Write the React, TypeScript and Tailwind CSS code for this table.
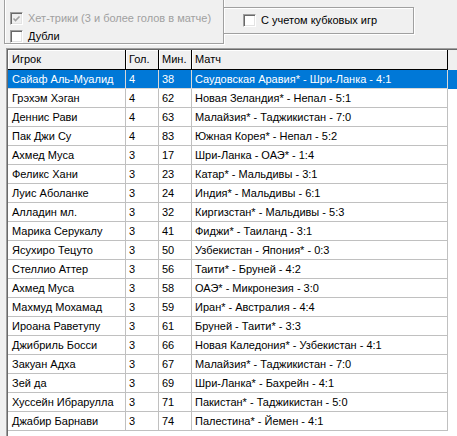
const rows: [string, number, number, string][] = [
  ['Сайаф Аль-Муалид', 4, 38, 'Саудовская Аравия* - Шри-Ланка - 4:1'],
  ['Грэхэм Хэган', 4, 62, 'Новая Зеландия* - Непал - 5:1'],
  ['Деннис Рави', 4, 63, 'Малайзия* - Таджикистан - 7:0'],
  ['Пак Джи Су', 4, 83, 'Южная Корея* - Непал - 5:2'],
  ['Ахмед Муса', 3, 17, 'Шри-Ланка - ОАЭ* - 1:4'],
  ['Феликс Хани', 3, 23, 'Катар* - Мальдивы - 3:1'],
  ['Луис Аболанке', 3, 24, 'Индия* - Мальдивы - 6:1'],
  ['Алладин мл.', 3, 32, 'Киргизстан* - Мальдивы - 5:3'],
  ['Марика Серукалу', 3, 41, 'Фиджи* - Таиланд - 3:1'],
  ['Ясухиро Тецуто', 3, 50, 'Узбекистан - Япония* - 0:3'],
  ['Стеллио Аттер', 3, 56, 'Таити* - Бруней - 4:2'],
  ['Ахмед Муса', 3, 58, 'ОАЭ* - Микронезия - 3:0'],
  ['Махмуд Мохамад', 3, 59, 'Иран* - Австралия - 4:4'],
  ['Ироана Раветупу', 3, 61, 'Бруней - Таити* - 3:3'],
  ['Джибриль Босси', 3, 66, 'Новая Каледония* - Узбекистан - 4:1'],
  ['Закуан Адха', 3, 67, 'Малайзия* - Таджикистан - 7:0'],
  ['Зей да', 3, 69, 'Шри-Ланка* - Бахрейн - 4:1'],
  ['Хуссейн Ибрарулла', 3, 71, 'Пакистан* - Таджикистан - 5:0'],
  ['Джабир Барнави', 3, 74, 'Палестина* - Йемен - 4:1'],
]

function CheckBox({ checked, disabled }: { checked?: boolean; disabled?: boolean }) {
  return (
    <span
      className={`relative w-[13px] h-[13px] shrink-0 border-t border-l border-t-[#a0a0a0] border-l-[#a0a0a0] border-b border-r border-b-white border-r-white shadow-[inset_1px_1px_0_#696969,inset_-1px_-1px_0_#e3e3e3] ${
        disabled ? 'bg-[#f0f0f0]' : 'bg-white'
      }`}
    >
      {checked && (
        <svg viewBox="0 0 11 11" className="absolute left-0 top-0 w-[11px] h-[11px]">
          <path d="M2.5 5.5 L4.5 7.5 L8.5 3.5" fill="none" stroke={disabled ? '#a0a0a0' : '#000'} strokeWidth="1.6" />
        </svg>
      )}
    </span>
  )
}

const cols = ['w-[118px] pl-[4px]', 'w-[33px] pl-[3px]', 'w-[33px] pl-[3px]', 'w-[256px] pl-[3px]']

export default function App() {
  return (
    <div className="w-[457px] h-[436px] overflow-hidden bg-[#f0f0f0] font-['Liberation_Sans',Arial,sans-serif] text-[11px] text-black">
      <div className="flex items-start h-[48px]">
        <div className="ml-[4px] -mt-[3px] w-[220px] h-[47px] border border-[#a0a0a0] shadow-[1px_1px_0_#fff,inset_1px_1px_0_#fff] flex flex-col gap-[5px] pt-[14px] pl-[5px]">
          <label className="flex items-center gap-[5px] h-[13px] whitespace-nowrap">
            <CheckBox checked disabled />
            <span className="text-[#a0a0a0]">Хет-трики (3 и более голов в матче)</span>
          </label>
          <label className="flex items-center gap-[5px] h-[13px] whitespace-nowrap">
            <CheckBox />
            <span>Дубли</span>
          </label>
        </div>
        <div className="-ml-[1px] mt-[7px] w-[191px] h-[27px] border border-[#a0a0a0] shadow-[1px_1px_0_#fff,inset_1px_1px_0_#fff] flex items-center pl-[19px]">
          <label className="flex items-center gap-[5px] whitespace-nowrap">
            <CheckBox />
            <span>С учетом кубковых игр</span>
          </label>
        </div>
      </div>

      <div className="ml-[6px] h-[388px] border-l border-t border-[#a0a0a0]">
        <div className="h-full border-l border-t border-[#696969] bg-white">
          <div className="flex h-[20px] bg-[#f0f0f0]">
            {['Игрок', 'Гол.', 'Мин.', 'Матч'].map((h, i) => (
              <div
                key={h}
                className={`${cols[i]} h-[20px] flex items-center border-r border-b border-black shadow-[inset_1px_1px_0_#fff]`}
              >
                {h}
              </div>
            ))}
          </div>
          {rows.map((r, ri) => {
            const sel = ri === 0
            return (
              <div key={ri} className={`flex h-[19px] ${sel ? 'bg-[#0078d7] text-white' : ''}`}>
                {r.map((c, i) => (
                  <div
                    key={i}
                    className={`${cols[i]} h-[19px] flex items-center whitespace-nowrap overflow-hidden border-r border-b ${
                      sel ? 'border-[#d8d8d8]' : 'border-[#c0c0c0]'
                    }`}
                  >
                    {c}
                  </div>
                ))}
              </div>
            )
          })}
        </div>
      </div>
    </div>
  )
}
